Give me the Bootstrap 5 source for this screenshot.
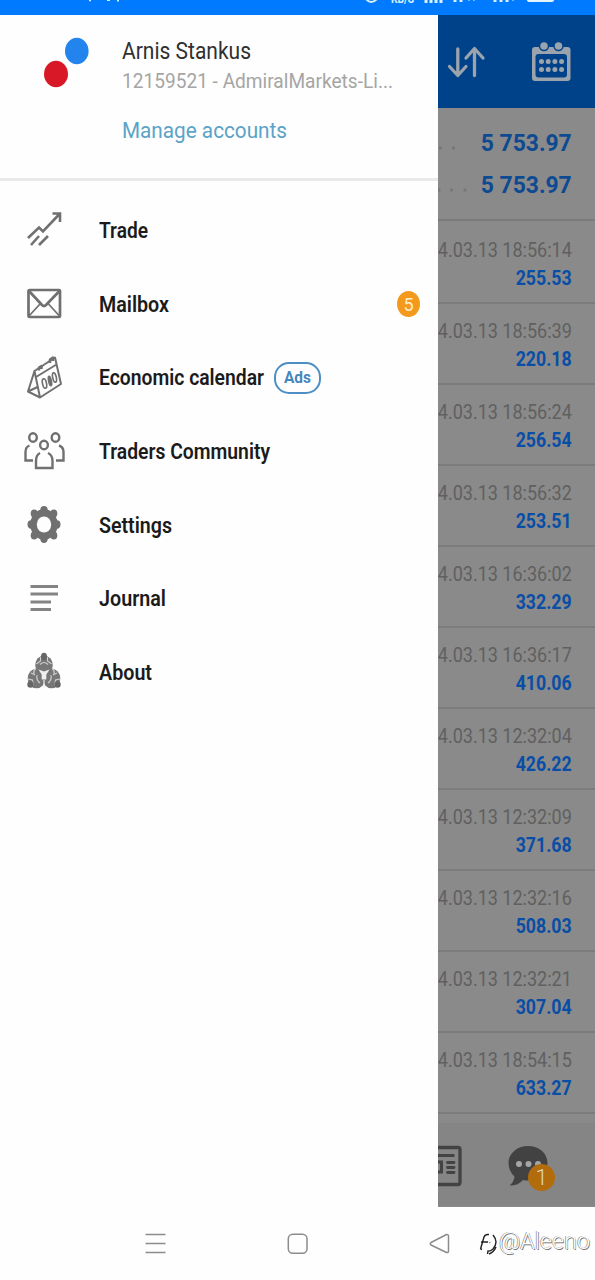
<!DOCTYPE html>
<html lang="en">
<head>
    <meta charset="UTF-8">
    <meta name="viewport" content="width=device-width, initial-scale=1.0">
    <title>Trading App - Menu</title>
    <!-- Bootstrap CSS -->
    <link href="https://cdn.jsdelivr.net/npm/bootstrap@5.3.0/dist/css/bootstrap.min.css" rel="stylesheet">
    <style>
        body { font-family: Roboto, "Liberation Sans", sans-serif; width: 595px; height: 1280px; background: #fefefe; }
        svg { display: block; flex-shrink: 0; }
        .status-strip { height: 15px; background: #007bff; }
        .app-area { height: 1192px; }
        .drawer { width: 438px; background: #fefefe; }
        .drawer-head { height: 166px; padding: 22px 0 0 43px; border-bottom: 3px solid #e9e9e9; }
        .profile-text { margin-left: 32px; }
        .fit { display: inline-block; white-space: nowrap; transform-origin: left center; }
        .fit-end { transform-origin: right center; }
        .user-name { font-size: 23px; line-height: 30px; color: #303030; }
        .user-account { font-size: 21px; line-height: 29px; color: #a5a5a5; }
        .manage { font-size: 22px; line-height: 30px; margin-top: 20px; color: #5ba3c7; }
        .menu-list { padding-top: 12.5px; }
        .menu-entry { height: 73.7px; padding: 0 18px 0 22px; }
        .menu-icon { width: 44px; height: 44px; color: #707070; }
        .menu-name { margin-left: 33.4px; padding-top: 1px; font-size: 21.5px; font-weight: 600; color: #1b1b1b; line-height: 30px; }
        .ads-pill { width: 47px; height: 32px; margin-left: 9.5px; border: 2px solid #4d8fc4; border-radius: 15px; font-size: 17px; font-weight: 700; color: #4587bd; }
        .mail-count { width: 23px; height: 26px; background: #f39a1d; color: #ffedc8; font-size: 18px; }
        .history { width: 157px; background: #8a8a8a; }
        .history-top { height: 93px; background: #004289; }
        .totals { height: 113px; padding: 15.5px 23px 0 0; border-bottom: 2px solid #7b7b7b; margin-bottom: 2px; }
        .total-line { height: 41.5px; }
        .total-value { font-size: 23.8px; font-weight: 700; color: #0d4a91; }
        .deal { height: 81px; padding: 12.6px 23px 0 0; border-bottom: 2px solid #7c7c7c; }
        .deal-time { font-size: 20.8px; line-height: 28px; color: #606060; }
        .deal-value { font-size: 20.8px; line-height: 28px; font-weight: 700; color: #084ea6; }
        .tabs { height: 83px; margin-top: 9px; padding-top: 2px; background: #858585; }
        .chat-tab { margin-left: 45px; }
        .chat-count { right: -6px; bottom: -4px; width: 27px; height: 27px; background: #b36c0c; color: #ddd2be; font-size: 22px; font-weight: 300; }
        .system-bar { height: 73px; }
        .watermark { font-size: 23px; font-weight: 300; line-height: 30px; color: #fff; text-shadow: .7px .7px 0 #777, -.7px -.4px 0 #8c8c8c; }
    </style>
</head>
<body class="overflow-hidden">
    <div class="status-strip">
        <svg width="595" height="15" viewBox="0 0 595 15">
            <g fill="none" stroke="#d9f0ff" stroke-width="2">
                <path d="M366-1Q371 5 377-1"/>
                <path d="M426 0v3M431 0v3M436 0v3M441 0v3M455 0v2M461 0v2M495 0v2M501 0v2M507 0v2" stroke-width="3"/>
                <path d="M90 0v1.2M107 0h3M118 0v1.5" stroke-width="2"/>
                <path d="M469 0v1M474 0v1M513 0v1" opacity=".5"/>
            </g>
            <path d="M527-2h27v2q0 2-3 2h-21q-3 0-3-2z" fill="#e4f4ff"/>
            <text x="391" y="3" font-size="12" font-weight="700" fill="#d9f0ff" textLength="23" lengthAdjust="spacingAndGlyphs">KB/S</text>
        </svg>
    </div>

    <div class="app-area d-flex">
        <!-- Side menu -->
        <div class="drawer">
            <div class="drawer-head d-flex">
                <svg width="47" height="55" viewBox="0 0 47 55">
                    <ellipse cx="33.8" cy="14" rx="11.8" ry="13.2" fill="#2484ee"/>
                    <ellipse cx="13" cy="37" rx="12" ry="13.2" fill="#d81826"/>
                </svg>
                <div class="profile-text d-flex flex-column align-items-start">
                    <span class="fit user-name" data-w="129">Arnis Stankus</span>
                    <span class="fit user-account" data-w="271">12159521 - AdmiralMarkets-Li...</span>
                    <span class="fit manage" data-w="165">Manage accounts</span>
                </div>
            </div>

            <div class="menu-list">
                <div class="menu-entry d-flex align-items-center">
                    <svg class="menu-icon" viewBox="0 0 44 44" fill="none" stroke="currentColor" stroke-width="2.6">
                        <path d="M6 30 17 19.5l4 4L37.500 6M30.500 5.500H38V14M9 37l8-9M17 37l9-9"/>
                    </svg>
                    <span class="fit menu-name" data-w="49">Trade</span>
                </div>
                <div class="menu-entry d-flex align-items-center">
                    <svg class="menu-icon" viewBox="0 0 44 44" fill="none" stroke="currentColor" stroke-width="2.700">
                        <rect x="6.500" y="8" width="31.500" height="27" rx="1"/>
                        <path d="M7 9 20 23q2 2 4 0L37.500 9"/>
                        <path d="m7 34 11-12M37.500 34 26.500 22" stroke-width="1.800"/>
                    </svg>
                    <span class="fit menu-name" data-w="70">Mailbox</span>
                    <span class="mail-count ms-auto rounded-circle d-flex align-items-center justify-content-center">5</span>
                </div>
                <div class="menu-entry d-flex align-items-center">
                    <svg class="menu-icon" viewBox="0 0 44 44" fill="none" stroke="currentColor" stroke-width="2" stroke-linejoin="round">
                        <path d="M12.500 15 33 1.500l6 26.500-21 13.500zM12.500 15 6 35.500l12 6M14 21 34.500 8.500M6 35.500l9.500-4.500"/>
                        <path d="M17 14.500v-3l2.500-1.500v3M28 7V3.500l3-2v3.500" stroke-width="2.500"/>
                        <g stroke-width="1.700">
                            <ellipse cx="22.500" cy="27.500" rx="2" ry="4.800" transform="rotate(-12 22.500 27.500)"/>
                            <ellipse cx="28" cy="25" rx="1.300" ry="4.800" fill="currentColor" transform="rotate(-12 28 25)"/>
                            <ellipse cx="32.500" cy="21.500" rx="1.800" ry="4.800" transform="rotate(-12 32.500 21.500)"/>
                        </g>
                    </svg>
                    <span class="fit menu-name" data-w="165">Economic calendar</span>
                    <span class="ads-pill d-flex align-items-center justify-content-center"><span class="fit" data-w="27">Ads</span></span>
                </div>
                <div class="menu-entry d-flex align-items-center">
                    <svg class="menu-icon" viewBox="0 0 44 44" fill="none" stroke="currentColor" stroke-width="2.400">
                        <ellipse cx="11" cy="8.500" rx="3.800" ry="4.300"/>
                        <ellipse cx="33.500" cy="8.500" rx="3.800" ry="4.300"/>
                        <ellipse cx="22" cy="16" rx="3.900" ry="4.300"/>
                        <path d="M7.500 16.500Q3.500 18 3.500 23v8.500H11M37 16.500q4.500 1.500 4.500 6.500v8.500H34"/>
                        <path d="M18 24q-4 2-4 8v7h16.500V32q0-6-4.500-8"/>
                    </svg>
                    <span class="fit menu-name" data-w="171">Traders Community</span>
                </div>
                <div class="menu-entry d-flex align-items-center">
                    <svg class="menu-icon" viewBox="0 0 44 44">
                        <g transform="translate(22 21.500) scale(1 1.120)">
                            <g fill="currentColor">
                                <circle r="13.700"/>
                                <circle cx="0" cy="-12.800" r="3.700"/><circle cx="9.800" cy="-9.800" r="3.500"/>
                                <circle cx="12.800" cy="0" r="3.700"/><circle cx="9.800" cy="9.800" r="3.500"/>
                                <circle cx="0" cy="12.800" r="3.700"/><circle cx="-9.800" cy="9.800" r="3.500"/>
                                <circle cx="-12.800" cy="0" r="3.700"/><circle cx="-9.800" cy="-9.800" r="3.500"/>
                            </g>
                            <circle r="7.200" fill="#fefefe"/>
                        </g>
                    </svg>
                    <span class="fit menu-name" data-w="73">Settings</span>
                </div>
                <div class="menu-entry d-flex align-items-center">
                    <svg class="menu-icon" viewBox="0 0 44 44" fill="none" stroke="#848484" stroke-width="3">
                        <path d="M8.500 9.500H36M8.500 17H36M8.500 25h20.500M8.500 32.500h20.500"/>
                    </svg>
                    <span class="fit menu-name" data-w="67">Journal</span>
                </div>
                <div class="menu-entry d-flex align-items-center">
                    <svg class="menu-icon" viewBox="0 0 44 44">
                        <g fill="#777">
                            <ellipse cx="22" cy="15" rx="8.800" ry="9.500"/>
                            <ellipse cx="14.500" cy="28.500" rx="8.800" ry="9.800"/>
                            <ellipse cx="29.500" cy="28.500" rx="8.800" ry="9.800"/>
                        </g>
                        <g fill="none" stroke="#cfcfcf" stroke-width="1.100">
                            <path d="M18.500 7v4l-4 3M25.500 7v4l4 3M18 14.500q4-4 8 0"/>
                            <path d="M6 29l4.500 1 1 5.500M15 25q-1 5 3 8M9 23l4 2M38 29l-4.500 1-1 5.500M29 25q1 5-3 8M35 23l-4 2"/>
                            <path d="M14 18q-3 3-2 6M30 18q3 3 2 6"/>
                        </g>
                        <g fill="#666">
                            <ellipse cx="22" cy="6.500" rx="3" ry="3.700"/>
                            <circle cx="8.500" cy="34.500" r="3.200"/>
                            <circle cx="35.500" cy="34.500" r="3.200"/>
                        </g>
                        <path d="m16.500 19.500 5.500 2 5.500-2-3.200 5v5h-4.600v-5z" fill="#efefef"/>
                        <path d="M22 30v8" stroke="#efefef" stroke-width="1.200"/>
                    </svg>
                    <span class="fit menu-name" data-w="53">About</span>
                </div>
            </div>
        </div>

        <!-- History under the shade -->
        <div class="history overflow-hidden">
            <div class="history-top">
                <svg width="157" height="93" viewBox="0 0 157 93">
                    <path d="M19.800 34v26M11.500 51.500l8.300 9 8.200-9M36.500 60.500V34M28 43l8.500-9.500 8.500 9.500" fill="none" stroke="#9ba3ac" stroke-width="3.300" stroke-linecap="round" stroke-linejoin="round"/>
                    <rect x="94" y="32" width="38.500" height="34" rx="3" fill="#9ba3ac"/>
                    <rect x="97.500" y="39" width="31.500" height="23.500" rx="3" fill="#004289"/>
                    <g fill="#9ba3ac" stroke="#004289" stroke-width="1.500">
                        <circle cx="106" cy="31" r="4.500"/>
                        <circle cx="120.500" cy="31" r="4.500"/>
                    </g>
                    <path d="M103.500 46.500h21M103.500 54.500h21" stroke="#9ba3ac" stroke-width="5" stroke-linecap="round" stroke-dasharray="0 6.700"/>
                </svg>
            </div>
            <div class="totals">
                <div class="total-line d-flex align-items-center justify-content-end">
                    <svg class="me-auto" width="34" height="12"><g fill="#787878"><circle cx="2.500" cy="10" r="1.700"/><circle cx="15.500" cy="10" r="1.700"/></g></svg>
                    <span class="fit fit-end total-value" data-w="91">5 753.97</span>
                </div>
                <div class="total-line d-flex align-items-center justify-content-end">
                    <svg class="me-auto" width="34" height="12"><g fill="#787878"><circle cx="1" cy="10" r="1.700"/><circle cx="13.500" cy="10" r="1.700"/><circle cx="27" cy="10" r="1.700"/></g></svg>
                    <span class="fit fit-end total-value" data-w="91">5 753.97</span>
                </div>
            </div>
            <div id="deals"></div>
            <div class="tabs d-flex align-items-center">
                <svg width="24" height="42" viewBox="0 0 24 42">
                    <g fill="none" stroke="#434343">
                        <path d="M-6 2.500h26q2 0 2 2v33q0 2-2 2H-6" stroke-width="3.300"/>
                        <path d="M-2 10.500h18.500" stroke-width="3"/>
                        <path d="M9.500 17.500h6.500M9.500 22.500h6.500M9.500 27.500h6.500" stroke-width="2.800" stroke-linecap="round"/>
                        <path d="M-3 17h6.500v10H-3" stroke-width="3"/>
                    </g>
                </svg>
                <div class="chat-tab position-relative">
                    <svg width="42" height="42" viewBox="0 0 42 42">
                        <path d="M21 1C10 1 1.500 8.500 1.500 18q0 8 6 13.500Q7 37 2.500 40.500q9 0 13.500-5.500 2 .5 5 .5c11 0 19.500-7.500 19.500-17.500S32 1 21 1z" fill="#424242"/>
                        <g fill="#a5a5a5"><circle cx="12" cy="19" r="3"/><circle cx="21.500" cy="19" r="3"/><circle cx="31" cy="19" r="3"/></g>
                    </svg>
                    <span class="chat-count position-absolute rounded-circle d-flex align-items-center justify-content-center">1</span>
                </div>
            </div>
        </div>
    </div>

    <!-- System navigation -->
    <div class="system-bar d-flex">
        <svg width="475" height="73" viewBox="0 0 475 73">
            <g fill="none" stroke="#8c8c8c" stroke-width="1.500" stroke-linejoin="round">
                <path d="M145.500 27.500h20M145.500 36.500h20M145.500 45.500h20"/>
                <rect x="288.300" y="27.300" width="18.700" height="19" rx="4.500"/>
                <path d="M431 35.500 446.500 27.500q2-.5 2 2v14.500q0 2-2 1.500L431 38q-1.500-1.500 0-2.500z"/>
            </g>
        </svg>
        <div class="d-flex align-items-start pt-3 mt-1">
            <svg class="mt-1" width="24" height="26" viewBox="0 0 24 26" fill="none" stroke="#222" stroke-width="1.400">
                <path d="M5.500 18 9 6q1-3 5-2.500M6 11h7M5.500 18l1.500.5"/>
                <path d="M18 4q6 7 0 14-3 2.500-5 2l-.5 3M14 23q5-2 7-7" />
                <path d="M14 11.500h1.500" stroke="#999"/>
            </svg>
            <span class="fit watermark" data-w="91">@Aleeno</span>
        </div>
    </div>

    <!-- Bootstrap JS -->
    <script src="https://cdn.jsdelivr.net/npm/bootstrap@5.3.0/dist/js/bootstrap.bundle.min.js"></script>

    <script>
        const deals = [
            ['18:56:14', '255.53'],
            ['18:56:39', '220.18'],
            ['18:56:24', '256.54'],
            ['18:56:32', '253.51'],
            ['16:36:02', '332.29'],
            ['16:36:17', '410.06'],
            ['12:32:04', '426.22'],
            ['12:32:09', '371.68'],
            ['12:32:16', '508.03'],
            ['12:32:21', '307.04'],
            ['18:54:15', '633.27']
        ];

        // Fill the history list
        document.getElementById('deals').innerHTML = deals.map(([time, value]) => `
            <div class="deal d-flex flex-column align-items-end">
                <span class="fit fit-end deal-time" data-w="134">4.03.13 ${time}</span>
                <span class="fit fit-end deal-value" data-w="56">${value}</span>
            </div>`).join('');

        // Condense each label to its width
        document.querySelectorAll('.fit').forEach(el => {
            const natural = el.getBoundingClientRect().width;
            const target = Number(el.dataset.w);
            el.style.transform = `scaleX(${target / natural})`;
            if (el.classList.contains('fit-end')) {
                el.style.marginLeft = `${target - natural}px`;
            } else {
                el.style.marginRight = `${target - natural}px`;
            }
        });
    </script>
</body>
</html>
